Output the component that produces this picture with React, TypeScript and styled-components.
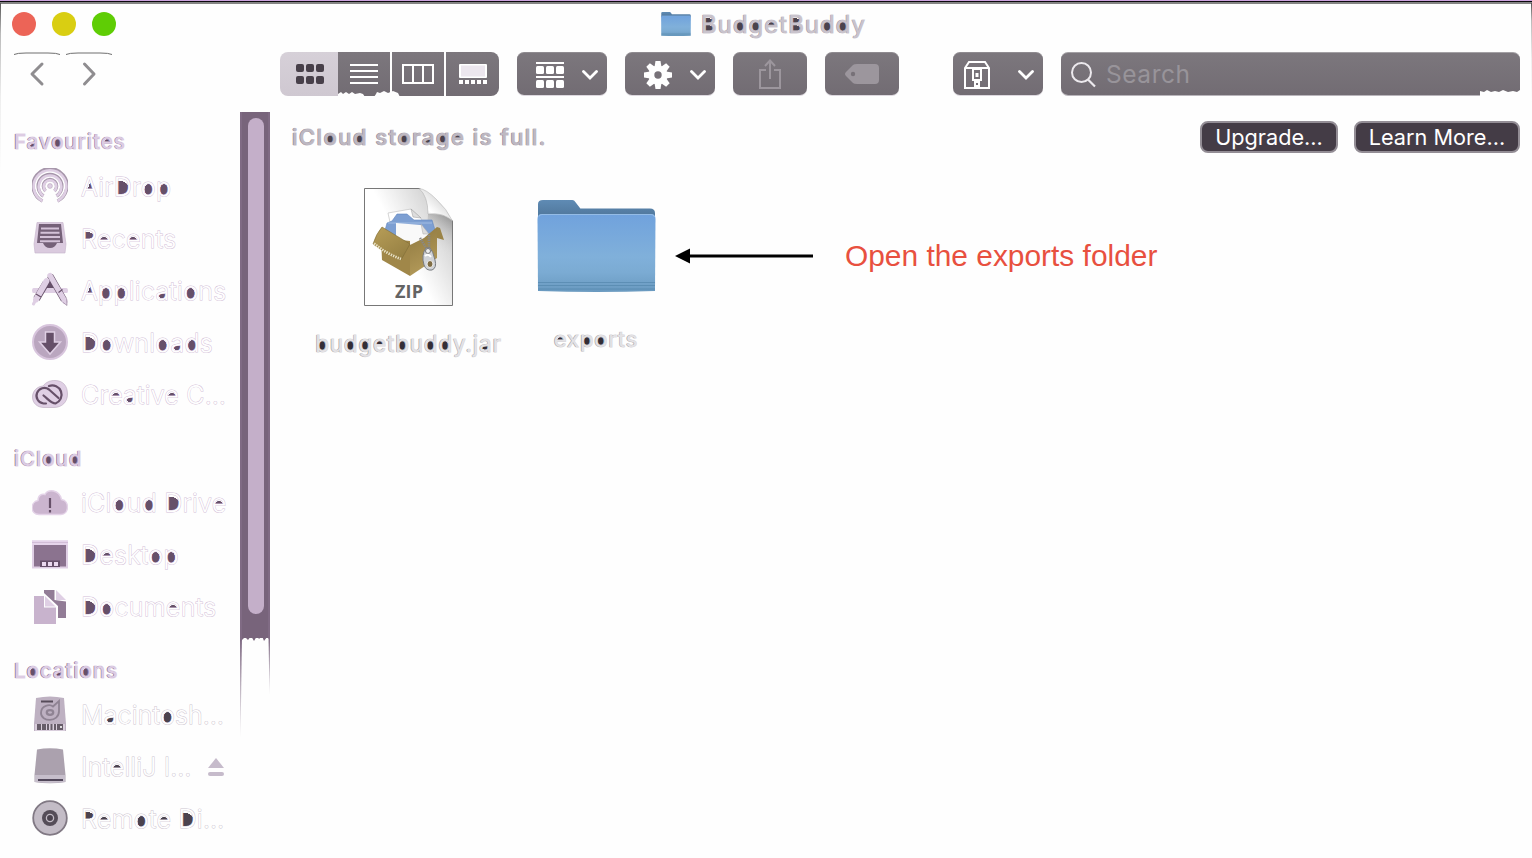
import React from 'react';
import styled, { createGlobalStyle, css } from 'styled-components';

const Global = createGlobalStyle`
  *{box-sizing:border-box}
  body{margin:0;background:#fefefe;overflow:hidden}
  svg{display:block;flex:none}
`;

const Window = styled.div`
  width:1532px;height:858px;display:flex;flex-direction:column;overflow:hidden;
  background:#fefefe;font-family:Inter,"Liberation Sans",sans-serif;position:relative;
`;
const TopEdge = styled.div`
  height:4px;flex:none;
  background:linear-gradient(#cda4de 0 1px,#0b080d 1px 2px,#858585 2px 4px);
`;
const SideEdge = styled.div<{ $right?: boolean }>`
  position:absolute;top:3px;width:1px;height:${p => (p.$right ? 100 : 170)}px;
  ${p => (p.$right ? 'right:0' : 'left:0')};
  background:linear-gradient(#555,#bbb 18%,#eee 55%,transparent);
`;
const TitleBar = styled.header`height:48px;flex:none;display:flex;align-items:flex-start;padding:8px 12px 0;`;
const Lights = styled.div`display:flex;gap:16px;width:649px;`;
const Light = styled.i<{ $c: string }>`width:24px;height:24px;border-radius:50%;background:${p => p.$c};`;
const TitleText = styled.h1`margin:0 0 0 10px;line-height:26px;height:26px;font-size:24px;`;
const ToolBar = styled.div`height:60px;flex:none;display:flex;align-items:flex-start;padding:0 12px 0 14px;`;
const NavButton = styled.div`width:46px;height:44px;margin-right:6px;`;
const ViewGroup = styled.div`display:flex;width:219px;height:44px;margin-left:162px;border-radius:8px;overflow:hidden;position:relative;`;
const buttonFill = css`background:linear-gradient(#7c777d,#726c73);`;
const Segment = styled.div<{ $active?: boolean; $w: number; $gap?: boolean }>`
  width:${p => p.$w}px;height:44px;display:flex;align-items:center;justify-content:center;
  ${buttonFill}
  ${p => p.$active && 'background:linear-gradient(#d6d0d8,#cfc8d1);padding-left:2px;'}
  ${p => p.$gap && 'margin-left:2px;'}
`;
const ToolButton = styled.div<{ $w: number; $ml?: number; $menu?: boolean }>`
  width:${p => p.$w}px;height:43px;margin-left:${p => p.$ml ?? 18}px;border-radius:7px;
  display:flex;align-items:center;justify-content:${p => (p.$menu ? 'space-between' : 'center')};
  ${buttonFill}
  ${p => p.$menu && 'padding:2px 9px 0 19px;'}
  border-top:1px solid #8f8b90;box-shadow:0 1px 0 #ddd8df;
`;
const SearchField = styled.div`
  flex:1;height:43px;margin-left:18px;border-radius:7px 7px 0 7px;display:flex;align-items:center;
  padding-left:9px;${buttonFill}border-top:1px solid #a3a0a4;box-shadow:0 1px 0 #b9b5bb;
  color:#98949a;font-size:24.5px;position:relative;
  span{margin-left:9px;letter-spacing:.55px;line-height:30px}
`;
const Torn = styled.svg<{ $x: number }>`position:absolute;left:${p => p.$x}px;bottom:-1px;`;
const Body = styled.div`display:flex;flex:1;min-height:0;`;
const Sidebar = styled.nav`width:240px;flex:none;overflow:hidden;`;
const Section = styled.section`&+&{padding-top:12px}`;
const SectionTitle = styled.h2`margin:0;height:49px;padding:14px 0 0 14px;line-height:32px;font-size:20.5px;section+section &{height:44px;padding-top:10px}`;
const Row = styled.div`height:52px;display:flex;align-items:center;padding-left:32px;line-height:34px;`;
const RowIcon = styled.div`width:36px;height:36px;margin:0 13px 2px 0;flex:none;`;

const ink = { side: '#665069', grey: '#4b434e' };

/* Hollow lettering: pale face, faint rim, dark counters showing through. */
const Letters = styled.span<{ $face: string; $rim: string; $size: number; $ls: number; $weight?: number; $edge?: string }>`
  color:${p => p.$face};font-size:${p => p.$size}px;letter-spacing:${p => p.$ls}px;
  font-weight:${p => p.$weight ?? 400};white-space:nowrap;
  -webkit-text-stroke:.9px ${p => p.$rim};paint-order:stroke fill;
  ${p => p.$edge && `text-shadow:-.7px 0 0 ${p.$edge};`}
`;
const round = (x: number, c: string) => `radial-gradient(ellipse .17em .22em at ${x}em .7em,${c} 94%,transparent)`;
const bowl = (y: number, h: number, w: number, c: string) =>
  `radial-gradient(ellipse 100% 56% at 0 50%,${c} 96%,transparent) .13em ${y}em/${w}em ${h}em no-repeat`;
const counters: Record<string, (c: string) => string> = {
  o: c => round(0.305, c), p: c => round(0.32, c), b: c => round(0.32, c), d: c => round(0.29, c), g: c => round(0.29, c),
  e: c => `radial-gradient(ellipse 50% 100% at 50% 100%,${c} 94%,transparent) .14em .51em/.32em .16em no-repeat`,
  a: c => `radial-gradient(ellipse 60% 60% at 60% 50%,${c} 94%,transparent) .15em .71em/.27em .16em no-repeat`,
  A: c => `conic-gradient(from 160deg at 50% 0,${c} 40deg,transparent 0) .18em .38em/.34em .32em no-repeat`,
  D: c => bowl(0.34, 0.54, 0.47, c), R: c => bowl(0.32, 0.28, 0.4, c),
  B: c => `${bowl(0.32, 0.25, 0.38, c)},${bowl(0.62, 0.27, 0.4, c)}`,
};
const Counter = styled.span<{ $k: string; $c: string }>`background:${p => counters[p.$k](p.$c)};`;

type Look = 'item' | 'disk' | 'heading' | 'title' | 'banner' | 'file';
const looks: Record<Look, { face: string; rim: string; ink: string; weight?: number; edge?: string }> = {
  item: { face: '#fefefe', rim: '#d3bfd8', ink: ink.side, weight: 300 },
  disk: { face: '#fefefe', rim: '#cdc5d0', ink: ink.grey, weight: 300 },
  heading: { face: '#ddcce3', rim: '#e3d5e8', ink: ink.side, weight: 500, edge: '#8b7590' },
  title: { face: '#c9c3cc', rim: '#d3ced5', ink: ink.grey, weight: 400, edge: '#aaa3ad' },
  banner: { face: '#beb8c1', rim: '#c5c0c8', ink: ink.grey, weight: 500, edge: '#99919c' },
  file: { face: '#e4e2e5', rim: '#d8d6d9', ink: '#342e36', weight: 400, edge: '#aaa' },
};
function Hollow({ text, look, size, ls = 0 }: { text: string; look: Look; size: number; ls?: number }) {
  const l = looks[look];
  return (
    <Letters $face={l.face} $rim={l.rim} $size={size} $ls={ls} $weight={l.weight} $edge={l.edge}>
      {text.split(/([abdegopABDR])/).filter(Boolean).map((s, i) =>
        counters[s] ? <Counter key={i} $k={s} $c={l.ink}>{s}</Counter> : s)}
    </Letters>
  );
}

const Scroll = styled.div`width:30px;flex:none;height:640px;`;
const Track = styled.div`
  height:526px;background:#78647b;border-left:2px solid #806b84;border-right:2px solid #806b84;
  padding:6px 6px 0;
`;
const Thumb = styled.div`width:16px;height:496px;border-radius:8px;background:#c4afc9;`;
const Content = styled.main`flex:1;padding-left:22px;`;
const Banner = styled.div`height:50px;display:flex;align-items:center;padding-right:12px;gap:16px;`;
const BannerText = styled.div`flex:1;line-height:32px;padding-top:2px;`;
const Pill = styled.div<{ $w: number }>`
  width:${p => p.$w}px;height:32px;border-radius:8px;background:#443c46;border:2px solid #938d95;
  color:#fff;font-size:21.7px;line-height:28px;text-align:center;white-space:nowrap;
`;
const Files = styled.div`display:flex;padding-top:26px;`;
const File = styled.div<{ $w: number; $top?: number }>`width:${p => p.$w}px;padding-top:${p => p.$top ?? 0}px;display:flex;flex-direction:column;align-items:center;`;
const FileName = styled.div<{ $mt: number }>`margin-top:${p => p.$mt}px;line-height:32px;height:32px;`;
const Note = styled.div`
  display:flex;align-items:center;height:40px;margin:48px 0 0 8px;color:#e8503f;
  font-family:"Liberation Sans",Arial,sans-serif;font-size:29.9px;white-space:nowrap;
  span{margin-left:32px}
`;

const Icon36 = ({ children }: { children: React.ReactNode }) => <svg width="36" height="36" viewBox="0 0 36 36">{children}</svg>;
const light = '#dfcfe4';
const icons: Record<string, React.ReactNode> = {
  airdrop: <Icon36><g fill="none" stroke="#a797ab" strokeWidth="3.4">
    <path d="M10.5 33A17 17 0 1 1 25.5 33M11.5 28A11.8 11.8 0 1 1 24.5 28M13.5 23A6.6 6.6 0 1 1 22.5 23" /></g>
    <g fill="none" stroke={light} strokeWidth="2.6"><path d="M10.5 33A16.3 16.3 0 1 1 25.5 33M11.5 28A11.3 11.3 0 1 1 24.5 28M13.5 23A6.3 6.3 0 1 1 22.5 23" /></g>
    <circle cx="18" cy="18" r="2.4" fill={light} stroke="#b6a4ba" strokeWidth=".6" /></Icon36>,
  recents: <Icon36><path d="M5 2.5H31L34 24 33 33H3L2 24Z" fill="#dacade" stroke="#c5b2c9" strokeWidth=".6" />
    <path d="M7 4H29L31 23H25Q23 28 18 28T11 23H5Z" fill="#756178" /><g stroke="#d4c2d8" strokeWidth="2"><path d="M9 8.5H27M8.5 12.8H27.5M8 17H28M8 21.2H28" /></g></Icon36>,
  apps: <Icon36><path d="M1.500 16H34.500Q36 16 36 18.500T34.500 21H1.500Q0 21 0 18.500T1.500 16Z" fill="#dfcfe4" /><path d="M13 16L18 6l5 10z" fill="#665069" />
    <path d="M18 3.500L32 28" stroke="#665069" strokeWidth="6.500" /><path d="M18 3.500L33 29.500" stroke={light} strokeWidth="5.400" strokeLinecap="round" /><path d="M30.500 30l4.500 3.500-.3-6.500" fill={light} stroke="#8b7590" strokeWidth=".6" />
    <path d="M14 11L4.500 27" stroke="#665069" strokeWidth="7" /><path d="M14.500 9L4 27.500" stroke={light} strokeWidth="5.800" strokeLinecap="round" fill="none" /><path d="M4.500 26L1.500 32" stroke={light} strokeWidth="3" strokeLinecap="round" /><path d="M26.500 20.500l4-3M4 22l5 3" stroke="#665069" strokeWidth="1.200" /></Icon36>,
  downloads: <Icon36><circle cx="18" cy="18" r="17" fill="#baa6bf" stroke="#d8c5dd" strokeWidth="2" />
    <path d="M13.5 8H22.5V18H28.5L18 30 7.5 18H13.5Z" fill="#665069" stroke={light} strokeWidth="1.5" /></Icon36>,
  cloudcc: <Icon36><path d="M12 31.5C5 31.5.5 27 .5 21S5 10.500 11 10C14 6 18 4.500 23 4.500 31 4.500 35.500 10 35.500 18S30 31.500 22 31.500Z" fill={light} stroke="#b9a8bd" strokeWidth=".6" />
    <g fill="none" stroke="#665069" strokeWidth="2.200" strokeLinecap="round"><path d="M14 27.500H11.500A7.800 7.800 0 1 1 17 13.500L26.500 22" /><path d="M17 10A9 9 0 1 1 23.500 27.500C19 27.500 16 23 11.500 19.500" /></g></Icon36>,
  icloud: <Icon36><path d="M7 30.500C-2 30.500-2 18 6 16.500 6 11 10 9.500 13 10.500 16 5 27 5 29.500 15.500 38 17 37 30.500 29 30.500Z" fill="#cbb5cf" stroke="#e4d3e8" strokeWidth="1.5" /><path d="M18 14V24M18 26V28.500" stroke="#665069" strokeWidth="2.200" /></Icon36>,
  desktop: <Icon36><path d="M1 5.500H35V31.500H1Z" fill="#8b738f" stroke={light} strokeWidth="2" /><path d="M0 4.500H36V9H0Z" fill="#e6d5eb" /><path d="M0 6.500H36" stroke="#cdb8d2" strokeWidth=".8" /><path d="M8 24.500H28V31H8Z" fill="#665069" /><path d="M10 26h4v4h-4zM16 26h4v4h-4zM22 26h4v4h-4z" fill="#ead9ee" /></Icon36>,
  documents: <Icon36><path d="M12 2H22.500V12L34 13.500V30H26V18L12 5Z" fill="#927c96" /><path d="M24 2L34 12H24Z" fill={light} /><path d="M2 8H12V19.500H24V36H2Z" fill="#c8b3cd" /><path d="M13 8L23.500 18.500H13Z" fill={light} /></Icon36>,
  hd: <Icon36><path d="M4 2Q18-1 32 2L34 28V35H2V28Z" fill="#beb1c2" /><path d="M3 28H33V35H3Z" fill="#d9cedc" /><path d="M5 28h4v6H5zM10 28h4v6h-4zM15 28h2v6h-2zM18.500 28h2v6h-2zM22 28h2v6h-2zM25 28h6v6h-6z" fill="#675d69" /><path d="M9 4.500H21V6.500H9Z" fill="#564b59" /><path d="M27 5V15C27 27 9 26 9 17 9 9 18 8 21 10.500Z" fill="none" stroke="#8f8393" strokeWidth="1.800" /><ellipse cx="18" cy="16.500" rx="3.200" ry="2.300" fill="none" stroke="#8f8393" strokeWidth="2.300" /><path d="M28 30h2v2h-2z" fill="#ddd" /></Icon36>,
  drive: <Icon36><path d="M5 1.500Q18-1 31 1.500L33.500 27V34Q18 36.500 2.500 34V27Z" fill="#aba1ae" /><path d="M3 27H33V34Q18 36 3 34Z" fill="#c6becb" /><path d="M6 31H31V33H6Z" fill="#51475a" /></Icon36>,
  disc: <Icon36><circle cx="18" cy="18" r="16.800" fill="#c3bcc6" stroke="#817984" strokeWidth="1.800" /><circle cx="18" cy="18" r="8" fill="#554d58" /><circle cx="18" cy="18" r="3.600" fill="#4b434e" stroke="#c3bcc6" strokeWidth="1.300" /></Icon36>,
};

const Chevron = () => <svg width="16" height="10" viewBox="0 0 16 10"><path d="M1.500 1.500L8 8l6.500-6.500" fill="none" stroke="#fff" strokeWidth="2.800" strokeLinecap="round" /></svg>;
const NavIcon = ({ flip }: { flip?: boolean }) => (
  <svg width="46" height="44"><path d="M0 2.500Q3 1 12 1H34Q43 1 46 2.500" fill="none" stroke="#6f6f6f" strokeWidth="1" />
    <path d={flip ? 'M18.500 12L28 22 18.500 32' : 'M28 12L18 22 28 32'} fill="none" stroke="#8f8d90" strokeWidth="3" strokeLinecap="round" strokeLinejoin="round" /></svg>
);
const Grid = () => (
  <svg width="28" height="20" viewBox="0 0 28 20">{[0, 10, 20].map(x => [0, 12].map(y => <rect key={`${x}-${y}`} x={x} y={y} width="8" height="8" rx="2" fill="#48404a" />))}</svg>
);

const Folder = ({ w, h }: { w: number; h: number }) => (
  <svg width={w} height={h} viewBox="0 0 118 92" preserveAspectRatio="none">
    <defs><linearGradient id="front" x2="0" y2="1"><stop stopColor="#70a2dd" /><stop offset=".55" stopColor="#80b0da" /><stop offset=".75" stopColor="#7babd3" /><stop offset="1" stopColor="#6999bf" /></linearGradient>
      <linearGradient id="back" x2="0" y2="1"><stop stopColor="#5f8bb4" /><stop offset="1" stopColor="#4d7397" /></linearGradient></defs>
    <path d="M1 20V4Q1 0 6 0H35Q37 0 38 2L43 8.500H112Q117 8.500 117 13V20Z" fill="url(#back)" />
    <path d="M.5 19Q.5 14 5 14H113Q117.500 14 117.500 19L117 91Q59 93 1 91Z" fill="url(#front)" />
    <path d="M2 16.500Q2 14.500 5 14.500H113Q116 14.500 116.500 17" fill="none" stroke="#94bce6" />
    <path d="M1 82.500H117M1 85.500H117M1 89H117" stroke="#5587ad" strokeWidth="1" opacity=".7" />
  </svg>
);

const ZipFile = () => (
  <svg width="90" height="118" viewBox="0 0 90 118">
    <defs>
      <linearGradient id="page" x1="0" y1=".6" x2=".85" y2="0"><stop offset=".4" stopColor="#fff" /><stop offset="1" stopColor="#c8c8c8" /></linearGradient>
      <linearGradient id="curl" x1="0" y1="1" x2=".8" y2=".2"><stop stopColor="#bbb" /><stop offset=".4" stopColor="#fff" /><stop offset="1" stopColor="#ccc" /></linearGradient>
      <linearGradient id="shade" x1=".8" y1="0" x2=".4" y2="1"><stop stopColor="#888" stopOpacity=".8" /><stop offset=".5" stopColor="#bbb" stopOpacity=".25" /><stop offset="1" stopColor="#fff" stopOpacity="0" /></linearGradient>
      <linearGradient id="flap" x2=".7" y2="1"><stop stopColor="#b89e58" /><stop offset="1" stopColor="#968043" /></linearGradient>
      <linearGradient id="side" x2=".3" y2="1"><stop stopColor="#8d773f" /><stop offset="1" stopColor="#b39a59" /></linearGradient>
    </defs>
    <path d="M.5 .5H56L88.500 33V117.500H.5Z" fill="url(#page)" stroke="#777" />
    <path d="M64 26Q81 25 88 33V70L62 55Z" fill="url(#shade)" />
    <path d="M55 .5Q64 8 64 26 79 24 88.500 33 83 21 72 11 62 1 55 .5Z" fill="url(#curl)" stroke="#aaa" strokeWidth=".5" />
    <path d="M24 25L47 21 57 30 64 47 31 57Z" fill="#fff" stroke="#bbb" strokeWidth=".6" /><path d="M47 21L49 29 57 30Z" fill="#ddd" stroke="#999" strokeWidth=".5" />
    <path d="M20 46L23 35 28 33 33 26H43L50 32H68L71 42 66 52 25 53Z" fill="#7d9fd2" stroke="#6287bf" strokeWidth=".6" />
    <path d="M24 35H68" stroke="#a3bde3" />
    <path d="M32 35L57 37 64 46 60 58 32 52Z" fill="#f9f9f9" /><path d="M57 36L59 46H65Z" fill="#ddd" stroke="#aaa" strokeWidth=".5" />
    <path d="M17 50L46 53 46 88 18 72Z" fill="#a08749" />
    <path d="M46 57L60 50 73 39V70L46 88Z" fill="url(#side)" />
    <path d="M18 39L46 56 37 72Q22 66 9 56 12 46 18 39Z" fill="url(#flap)" stroke="#806d35" strokeWidth=".6" />
    <path d="M10 55.500Q23 66 37 71" fill="none" stroke="#e7dfc2" strokeWidth="2.600" strokeDasharray="1.500 1" />
    <path d="M73 39L76 40 80 52 73 50Z" fill="#9b8447" />
    <path d="M56 50L64 63M65 47V60" stroke="#888" strokeWidth="2.600" strokeDasharray="1.300 1" />
    <path d="M62 60Q57 67 60 77 62 83 68 82 73 80 71 72 69 63 66 60Z" fill="#d0d3d8" stroke="#787b80" /><circle cx="64" cy="63" r="2.500" fill="#eee" stroke="#777" /><ellipse cx="66" cy="76" rx="3" ry="3.500" fill="#806d45" stroke="#eee" /><path d="M61 68Q64 65 67 69" stroke="#fff" fill="none" strokeWidth="2" />
    <text x="45" y="109.500" textAnchor="middle" fontFamily="Open Sans, Noto Sans, sans-serif" fontWeight="700" fontSize="18" fill="#646464" textLength="28">ZIP</text>
  </svg>
);

type Item = [string, string, number, number];
const sections: { title: string; ls: number; look: Look; items: Item[] }[] = [
  { title: 'Favourites', ls: 0.95, look: 'item', items: [['airdrop', 'AirDrop', 25, 0.25], ['recents', 'Recents', 25, 0.3], ['apps', 'Applications', 25, 0.25], ['downloads', 'Downloads', 25, 0.2], ['cloudcc', 'Creative C…', 25, 0.2]] },
  { title: 'iCloud', ls: 0.95, look: 'item', items: [['icloud', 'iCloud Drive', 25, 0.25], ['desktop', 'Desktop', 25, 0.3], ['documents', 'Documents', 25, 0.3]] },
  { title: 'Locations', ls: 0.95, look: 'disk', items: [['hd', 'Macintosh…', 25, 0.15], ['drive', 'IntelliJ I…', 25, 0.1], ['disc', 'Remote Di…', 25, 0.3]] },
];
const Eject = styled.svg`margin:0 16px 0 auto;`;

export default function App() {
  return (
    <Window>
      <Global />
      <TopEdge /><SideEdge /><SideEdge $right />
      <TitleBar>
        <Lights><Light $c="#ec6457" /><Light $c="#d9ce12" /><Light $c="#5fcd05" /></Lights>
        <Folder w={30} h={24} />
        <TitleText><Hollow text="BudgetBuddy" look="title" size={24} ls={1} /></TitleText>
      </TitleBar>
      <ToolBar>
        <NavButton><NavIcon /></NavButton><NavButton><NavIcon flip /></NavButton>
        <ViewGroup>
          <Segment $w={58} $active><Grid /></Segment>
          <Segment $w={52}><svg width="28" height="20"><path d="M0 1H28M0 7H28M0 13H28M0 19H28" stroke="#fff" strokeWidth="2" /></svg></Segment>
          <Segment $w={52} $gap><svg width="32" height="20"><path d="M1 1H31V19H1ZM11 1V19M21 1V19" fill="none" stroke="#fff" strokeWidth="2" /></svg></Segment>
          <Segment $w={53} $gap><svg width="28" height="20"><rect width="28" height="14" rx="1" fill="#fff" /><rect x="2" y="1.500" width="24" height="11" fill="#ece6ee" /><path d="M0 18H28" stroke="#fff" strokeWidth="4" strokeDasharray="4 2" /></svg></Segment>
          <Torn $x={58} width="62" height="7"><path d="M0 8V4L3 2 5 4 8 2 11 4 14 2 17 4 22 3 25 4 27 7 36 7 38 4 39 2 42 3 46 1 50 3 55 1 60 3 62 7V8Z" fill="#fefefe" /></Torn>
        </ViewGroup>
        <ToolButton $w={90} $menu><svg width="28" height="26"><path d="M0 1H28M0 15H28" stroke="#fff" strokeWidth="2" />{[0, 10, 20].map(x => <g key={x} fill="#fff"><rect x={x} y="4" width="8" height="8" rx="1.500" /><rect x={x} y="18" width="8" height="8" rx="1.500" /></g>)}</svg><Chevron /></ToolButton>
        <ToolButton $w={90} $menu><svg width="28" height="28" viewBox="-14 -14 28 28"><g fill="#fff">{[0, 45, 90, 135].map(a => <path key={a} transform={`rotate(${a})`} d="M-2.500-14H2.500L3.500-8V8L2.500 14H-2.500L-3.500 8V-8Z" />)}</g><circle r="6.500" fill="none" stroke="#fff" strokeWidth="6" /><circle r="3.700" fill="#777178" /></svg><Chevron /></ToolButton>
        <ToolButton $w={74}><svg width="22" height="30" viewBox="0 0 22 30"><path d="M7 11H1V29H21V11H15M11 20V2M6 7L11 1.500 16 7" fill="none" stroke="#9c969d" strokeWidth="2" /></svg></ToolButton>
        <ToolButton $w={74}><svg width="34" height="20"><path d="M8 1Q9 0 12 0H30Q34 0 34 4V16Q34 20 30 20H12Q9 20 8 19L1 12Q-1 10 1 8Z" fill="#9c969d" /><circle cx="8" cy="10" r="2.200" fill="#777178" /></svg></ToolButton>
        <ToolButton $w={90} $ml={54} $menu><svg width="26" height="28" viewBox="0 0 26 28" style={{ marginLeft: -8 }}><path d="M1 7L5 1H21L25 7V27H1ZM1 7H25M9 8H17V19H9ZM11 19V27M15 19V27" fill="none" stroke="#fff" strokeWidth="2" /><path d="M11.500 12h3v4h-3zM12 20h2v2h-2zM12 24h2v2h-2z" fill="#fff" /></svg><Chevron /></ToolButton>
        <SearchField><svg width="27" height="27"><circle cx="11.500" cy="11.500" r="9.500" fill="none" stroke="#ece9ed" strokeWidth="2" /><path d="M18 18.500L25 25.500" stroke="#ece9ed" strokeWidth="2.200" /></svg><span>Search</span>
          <Torn $x={419} width="40" height="6"><path d="M0 7V1L4 2 7 0 11 2 15 1 19 2 23 0 28 2 33 1 37 2 40 0V7Z" fill="#fefefe" /></Torn></SearchField>
      </ToolBar>
      <Body>
        <Sidebar>
          {sections.map(s => (
            <Section key={s.title}>
              <SectionTitle><Hollow text={s.title} look="heading" size={20.500} ls={s.ls} /></SectionTitle>
              {s.items.map(([k, t, size, ls]) => (
                <Row key={t}><RowIcon>{icons[k]}</RowIcon><Hollow text={t} look={s.look} size={size} ls={ls} />
                  {k === 'drive' && <Eject width="16" height="18"><path d="M8 0L16 10H0Z" fill="#c6bbcb" /><rect y="14" width="16" height="4" rx="2" fill="#c6bbcb" /></Eject>}</Row>
              ))}
            </Section>
          ))}
        </Sidebar>
        <Scroll>
          <Track><Thumb /></Track>
          <svg width="30" height="112"><defs><linearGradient id="fade" x2="0" y2="1"><stop stopColor="#806b84" /><stop offset="1" stopColor="#806b84" stopOpacity="0" /></linearGradient></defs>
            <path d="M0 -6H30V2L27 -1 24 3 22-2 19 1 17-2 14 3 11-2 8 2 5-1 2 2 0 4Z" fill="#78647b" /><path d="M0 0H2L.5 100H0Z" fill="url(#fade)" /><path d="M28.500 0H30V57H29.500Z" fill="url(#fade)" /></svg>
        </Scroll>
        <Content>
          <Banner><BannerText><Hollow text="iCloud storage is full." look="banner" size={22} ls={1.45} /></BannerText><Pill $w={138}>Upgrade...</Pill><Pill $w={166}>Learn More...</Pill></Banner>
          <Files>
            <File $w={233}><ZipFile /><FileName $mt={22}><Hollow text="budgetbuddy.jar" look="file" size={22.500} ls={0.800} /></FileName></File>
            <File $w={142} $top={12}><Folder w={119} h={92} /><FileName $mt={31}><Hollow text="exports" look="file" size={22} ls={0.900} /></FileName></File>
            <Note><svg width="138" height="16"><path d="M14 8H138" stroke="#000" strokeWidth="3" /><path d="M0 8L15 .5V15.500Z" /></svg><span>Open the exports folder</span></Note>
          </Files>
        </Content>
      </Body>
    </Window>
  );
}
